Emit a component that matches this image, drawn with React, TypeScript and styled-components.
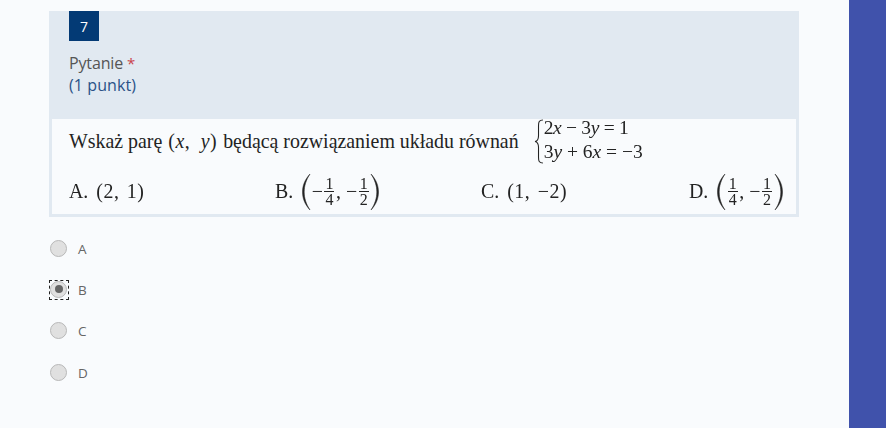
import React from "react";
import styled, { createGlobalStyle } from "styled-components";

const Global = createGlobalStyle`
  html, body { margin: 0; padding: 0; height: 100%; overflow: hidden; background: #f9fbfd; }
  #root { height: 100%; }
`;
const Page = styled.div`
  display: flex; height: 428px; width: 886px;
  font-family: "Open Sans", "Noto Sans", sans-serif;
`;
const Main = styled.main`
  flex: 1; min-width: 0; padding: 11px 50px 0 49px; box-sizing: border-box;
`;
const Sidebar = styled.aside`
  width: 37px; flex: none; background: #4052ab;
`;
const Card = styled.section`
  background: #e1e9f1; padding: 0 3px 3px; height: 206px; box-sizing: border-box;
  display: flex; flex-direction: column;
`;
const Head = styled.header`
  height: 108px; padding-left: 17px; flex: none;
`;
const Badge = styled.div`
  width: 30px; height: 30px; background: #033a75; color: #fff;
  display: flex; align-items: center; justify-content: center;
  font-size: 14px; font-weight: 500;
`;
const Title = styled.div`
  margin-top: 11px; font-size: 16px; line-height: 22px; color: #555; letter-spacing: -0.15px;
`;
const Star = styled.span`color: #c9434b; font-size: 15px;`;
const Points = styled.div`
  font-size: 16px; line-height: 22px; color: #2a5288; letter-spacing: 0.1px;
`;
const Sheet = styled.div`
  flex: 1; background: #f9fbfd; padding-left: 17px;
  font-family: "Liberation Serif", serif; color: #232323; font-size: 19.9px;
  filter: blur(0.35px);
`;
const Question = styled.div`
  display: flex; align-items: center; height: 45px;
`;
const Pair = styled.span`
  padding: 0 1px; letter-spacing: 0.5px;
`;
const Var = styled.i`font-style: italic;`;
const SecondVar = styled(Var)`margin-left: 5px;`;
const System = styled.div`
  display: flex; align-items: flex-start; align-self: flex-start; margin-left: 15px;
  font-size: 19.5px;
`;
const BraceSlot = styled.div`
  height: 45px; overflow: hidden; flex: none;
`;
const Lines = styled.div`
  display: flex; flex-direction: column; gap: 6px; line-height: 18px;
`;
const Tight = styled.span`letter-spacing: -0.3px;`;
const Answers = styled.div`
  display: grid; grid-template-columns: 206px 206px 208px auto; align-items: center;
  height: 50px; padding-top: 5px; box-sizing: border-box;
`;
const Answer = styled.div`
  display: flex; align-items: center; gap: 8px;
`;
const Coord = styled.span`
  word-spacing: 2px; letter-spacing: 0.5px;
`;
const Paren = styled.div`
  display: flex; align-items: center; gap: 0.5px;
`;
const Frac = styled.span`
  display: inline-flex; flex-direction: column; align-items: center; font-size: 16px; line-height: 16px;
  margin: 0 1px;
`;
const Num = styled.span`border-bottom: 1px solid #232323; padding: 0 1px; line-height: 15px;`;
const Options = styled.div`
  display: flex; flex-direction: column; margin-top: 11px;
`;
const Option = styled.label`
  display: flex; align-items: center; height: 41.3px; font-size: 13.5px; color: #666;
`;
const Focus = styled.span<{ $on?: boolean }>`
  width: 20px; height: 20px; box-sizing: border-box; display: flex; align-items: center; justify-content: center;
  padding-right: 1px; padding-bottom: 1px;
  border: 1px ${p => (p.$on ? "dashed #222" : "solid transparent")}; margin-right: 9px;
`;
const Radio = styled.span<{ $on?: boolean }>`
  width: 17px; height: 17px; box-sizing: border-box; border-radius: 50%; flex: none;
  border: 1.5px solid #b8b8b8; background: #e0e0e0; display: flex; align-items: center; justify-content: center;
  &::after { content: ""; width: 8px; height: 8px; border-radius: 50%; background: ${p => (p.$on ? "#666" : "transparent")}; }
`;

const BigParen = ({ right }: { right?: boolean }) => (
  <svg width="10" height="38" viewBox="0 0 10 38" style={right ? { transform: "scaleX(-1)" } : undefined}>
    <path d="M9 1C3.5 7 1.5 13 1.5 19s2 12 7.5 18C5 31 3.2 25 3.2 19S5 7 9 1Z" fill="#232323" stroke="#232323" strokeWidth="0.5" />
  </svg>
);
const Brace = () => (
  <svg width="10" height="45" viewBox="0 0 10 46" display="block">
    <path d="M9 1C5 1 4.5 3 4.5 7v10c0 4-1.5 5.5-3.5 6 2 .5 3.5 2 3.5 6v10c0 4 .5 6 4.5 6" fill="none" stroke="#232323" strokeWidth="1.1" />
  </svg>
);

const Fraction = ({ n, d }: { n: string; d: string }) => (
  <Frac><Num>{n}</Num><span>{d}</span></Frac>
);

const OPTIONS = ["A", "B", "C", "D"];

export default function App() {
  return (
    <Page>
      <Global />
      <Main>
        <Card>
          <Head>
            <Badge>7</Badge>
            <Title>Pytanie <Star>*</Star></Title>
            <Points>(1 punkt)</Points>
          </Head>
          <Sheet>
            <Question>
              <span>Wskaż parę <Pair>(<Var>x</Var>,&nbsp;<SecondVar>y</SecondVar>)</Pair> będącą rozwiązaniem układu równań</span>
              <System>
                <BraceSlot><Brace /></BraceSlot>
                <Lines>
                  <Tight>2<Var>x</Var> − 3<Var>y</Var> = 1</Tight>
                  <span>3<Var>y</Var> + 6<Var>x</Var> = −3</span>
                </Lines>
              </System>
            </Question>
            <Answers>
              <Answer>A. <Coord>(2, 1)</Coord></Answer>
              <Answer>B. <Paren><BigParen />−<Fraction n="1" d="4" />, −<Fraction n="1" d="2" /><BigParen right /></Paren></Answer>
              <Answer>C. <Coord>(1, −2)</Coord></Answer>
              <Answer>D. <Paren><BigParen /><Fraction n="1" d="4" />, −<Fraction n="1" d="2" /><BigParen right /></Paren></Answer>
            </Answers>
          </Sheet>
        </Card>
        <Options>
          {OPTIONS.map(o => (
            <Option key={o}>
              <Focus $on={o === "B"}><Radio $on={o === "B"} /></Focus>
              {o}
            </Option>
          ))}
        </Options>
      </Main>
      <Sidebar />
    </Page>
  );
}
